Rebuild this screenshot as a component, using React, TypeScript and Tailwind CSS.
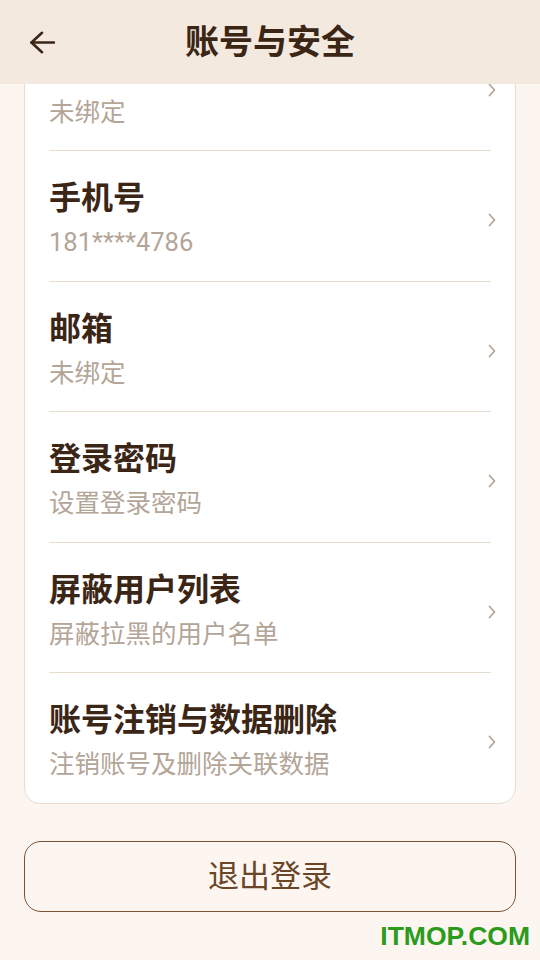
import React from "react";

const rows = [
  { title: "微信", sub: "未绑定" },
  { title: "手机号", sub: "181****4786" },
  { title: "邮箱", sub: "未绑定" },
  { title: "登录密码", sub: "设置登录密码" },
  { title: "屏蔽用户列表", sub: "屏蔽拉黑的用户名单" },
  { title: "账号注销与数据删除", sub: "注销账号及删除关联数据" },
];

function Chevron() {
  return (
    <svg width="8" height="14" viewBox="0 0 8 14" fill="none">
      <polyline
        points="1.5,1.5 6.5,7 1.5,12.5"
        stroke="#b3a597"
        strokeWidth="1.8"
        strokeLinecap="round"
        strokeLinejoin="round"
      />
    </svg>
  );
}

export default function App() {
  return (
    <div
      className="relative w-[540px] h-[960px] overflow-hidden bg-[#fdf6f0]"
      style={{ fontFamily: 'Roboto, "Noto Sans CJK SC", sans-serif' }}
    >
      <header className="absolute inset-x-0 top-0 z-10 h-[84px] bg-[#f4e9df] flex items-center justify-center">
        <svg
          className="absolute left-[29px] top-[31px]"
          width="26"
          height="23"
          viewBox="0 0 26 23"
          fill="none"
        >
          <line x1="2.5" y1="11.5" x2="25" y2="11.5" stroke="#3b2616" strokeWidth="2.6" strokeLinecap="round" />
          <polyline
            points="13,1.8 2.5,11.5 13,21.2"
            stroke="#3b2616"
            strokeWidth="2.6"
            strokeLinecap="round"
            strokeLinejoin="round"
          />
        </svg>
        <h1 className="text-[34px] leading-[40px] font-bold text-[#3b2616]">账号与安全</h1>
      </header>

      <main className="px-6 pt-[20px]">
        <div className="bg-white border border-[#e8ddcf] rounded-2xl">
          {rows.map((r, i) => (
            <div
              key={i}
              className={`mx-6 h-[130.4px] flex items-start pt-[27px] ${
                i < rows.length - 1 ? "border-b border-[#e6ddd0]" : ""
              }`}
            >
              <div className="flex-1 flex flex-col">
                <div className="text-[32px] leading-[40px] font-bold text-[#3b2616]">{r.title}</div>
                <div className="mt-[8px] text-[25.5px] leading-[32px] text-[#b3a597]">{r.sub}</div>
              </div>
              <div className="mt-[35px] -mr-[5px]">
                <Chevron />
              </div>
            </div>
          ))}
        </div>

        <button className="mt-[37px] w-full h-[71px] rounded-[17px] border-[1.5px] border-[#7b5234] bg-transparent flex items-center justify-center">
          <span className="text-[31px] leading-[40px] text-[#6a4527]">退出登录</span>
        </button>
      </main>

      <div
        className="absolute right-[10px] top-[923px] text-[26.5px] leading-none font-bold text-[#2b9b1c]"
        style={{ fontFamily: '"Liberation Sans", Arial, sans-serif' }}
      >
        ITMOP.COM
      </div>
    </div>
  );
}
